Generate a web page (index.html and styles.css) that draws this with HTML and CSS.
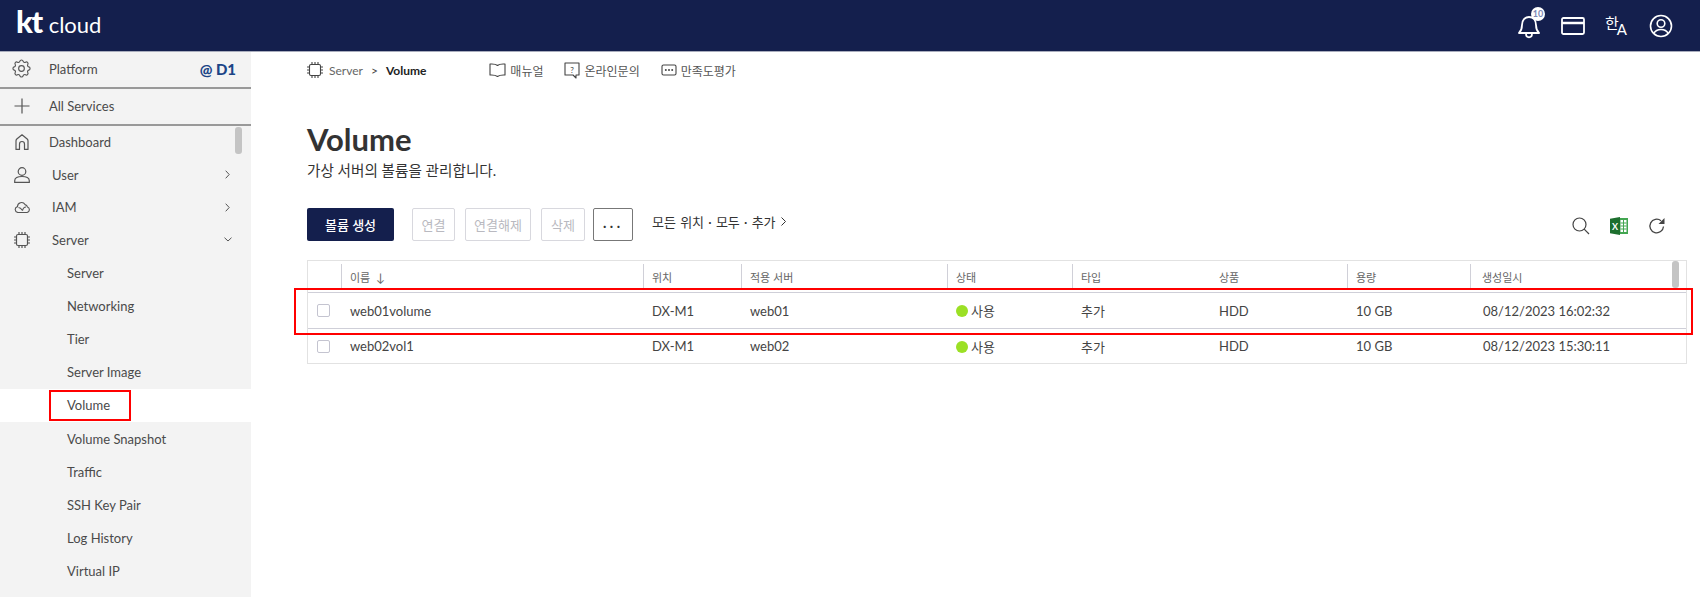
FILE: index.html
```html
<!DOCTYPE html>
<html lang="ko">
<head>
  <meta charset="utf-8">
  <title>Volume - kt cloud</title>
  <link rel="stylesheet" href="styles.css">
</head>
<body>

  <header class="topbar">
    <div class="logo"><span class="logo-kt">kt</span><span class="logo-cloud">cloud</span></div>
    <div class="top-icons">
      <div class="bell">
        <svg width="26" height="26" viewBox="0 0 26 26" fill="none" stroke="#fff" stroke-width="1.8" stroke-linejoin="round"><path d="M3 20c2-2 3-4 3-8 0-5 3-8 7-8s7 3 7 8c0 4 1 6 3 8z"/><path d="M10 20.500c0 5 6 5 6 0"/></svg>
        <span class="bell-count">10</span>
      </div>
      <svg width="24" height="18" viewBox="0 0 24 18" fill="none" stroke="#fff" stroke-width="1.8"><rect x="1" y="1" width="22" height="16" rx="1.500"/><path d="M1 6h22" stroke-width="2.500"/></svg>
      <div class="lang"><span class="lang-ko">한</span><span class="lang-a">A</span></div>
      <svg width="24" height="24" viewBox="0 0 24 24" fill="none" stroke="#fff" stroke-width="1.600"><circle cx="12" cy="12" r="10.500"/><circle cx="12" cy="9.500" r="3.800"/><path d="M4.800 19.500c1.500-3 4-4 7.200-4s5.700 1 7.200 4"/></svg>
    </div>
  </header>

  <div class="page">
    <aside class="sidebar">
      <div class="side-top">
        <svg class="side-icon icon-gear" width="19" height="19" viewBox="2 2 20 20" fill="none" stroke="#555" stroke-width="1.200" stroke-linejoin="round"><path d="M10.325 4.317c.426-1.756 2.924-1.756 3.350 0a1.724 1.724 0 0 0 2.573 1.066c1.543-.94 3.310.826 2.370 2.370a1.724 1.724 0 0 0 1.065 2.572c1.756.426 1.756 2.924 0 3.350a1.724 1.724 0 0 0-1.066 2.573c.94 1.543-.826 3.310-2.370 2.370a1.724 1.724 0 0 0-2.572 1.065c-.426 1.756-2.924 1.756-3.350 0a1.724 1.724 0 0 0-2.573-1.066c-1.543.94-3.310-.826-2.370-2.370a1.724 1.724 0 0 0-1.065-2.572c-1.756-.426-1.756-2.924 0-3.350a1.724 1.724 0 0 0 1.066-2.573c-.94-1.543.826-3.310 2.370-2.370.996.608 2.296.07 2.572-1.065z"/><circle cx="12" cy="12" r="3"/></svg>
        <span class="side-label">Platform</span>
        <span class="zone">@ D1</span>
      </div>
      <div class="side-top">
        <svg class="side-icon" width="16" height="16" viewBox="0 0 16 16" fill="none" stroke="#555" stroke-width="1.200"><path d="M8 .5v15M.5 8h15"/></svg>
        <span class="side-label">All Services</span>
      </div>

      <nav class="side-menu">
        <div class="side-scroll"></div>
        <div class="menu-item">
          <svg class="side-icon icon-home" width="14" height="16" viewBox="0 0 14 16" fill="none" stroke="#555" stroke-width="1.200" stroke-linejoin="round"><path d="M1 15.400V6.800c0-.8.300-1.300.8-1.800L7 .8 12.200 5c.5.500.8 1 .8 1.800v8.600H9.500V10a2.500 2.500 0 0 0-5 0v5.400z"/></svg>
          <span class="side-label">Dashboard</span>
        </div>
        <div class="menu-item menu-sub">
          <svg class="side-icon" width="16" height="16" viewBox="0 0 16 16" fill="none" stroke="#555" stroke-width="1.200"><circle cx="8" cy="4.500" r="3.800"/><path d="M.7 15.400v-1.600c0-2.800 2.800-4.300 7.300-4.300s7.300 1.500 7.300 4.300v1.600z"/></svg>
          <span class="side-label">User</span>
          <svg class="chev" width="5" height="9" viewBox="0 0 5 9" fill="none" stroke="#555" stroke-width="1"><path d="M.7.7l3.500 3.800L.7 8.300"/></svg>
        </div>
        <div class="menu-item menu-sub">
          <svg class="side-icon" width="17" height="12" viewBox="0 0 17 12" fill="none" stroke="#555" stroke-width="1.100"><path d="M4 11.500a3 3 0 0 1-.5-5.900 4 4 0 0 1 7.500-2 3.200 3.200 0 0 1 2.500 2.500 2.800 2.800 0 0 1-.5 5.400z"/><path d="M4.500 6.500c2 0 3 1.500 4 3M12 6c-1.500 0-3 1.500-3.500 3.500"/></svg>
          <span class="side-label">IAM</span>
          <svg class="chev" width="5" height="9" viewBox="0 0 5 9" fill="none" stroke="#555" stroke-width="1"><path d="M.7.7l3.500 3.800L.7 8.300"/></svg>
        </div>
        <div class="menu-item menu-sub menu-open">
          <svg class="side-icon" width="16" height="16" viewBox="0 0 16 16" fill="none" stroke="#555" stroke-width="1.200"><rect x="2.500" y="2.500" width="11" height="11" rx="1.500"/><path d="M5 0v2.500M8 0v2.500M11 0v2.500M5 13.500V16M8 13.500V16M11 13.500V16M0 5h2.500M0 8h2.500M0 11h2.500M13.500 5H16M13.500 8H16M13.500 11H16"/></svg>
          <span class="side-label">Server</span>
          <svg class="chev" width="8" height="5" viewBox="0 0 8 5" fill="none" stroke="#555" stroke-width="1"><path d="M.5.7L4 4 7.500.7"/></svg>
        </div>
        <a class="sub-item">Server</a>
        <a class="sub-item">Networking</a>
        <a class="sub-item">Tier</a>
        <a class="sub-item">Server Image</a>
        <a class="sub-item sub-active"><span class="side-mark"></span>Volume</a>
        <a class="sub-item">Volume Snapshot</a>
        <a class="sub-item">Traffic</a>
        <a class="sub-item">SSH Key Pair</a>
        <a class="sub-item">Log History</a>
        <a class="sub-item">Virtual IP</a>
      </nav>
    </aside>

    <main class="content">
      <div class="crumbs">
        <svg width="16" height="16" viewBox="0 0 16 16" fill="none" stroke="#444" stroke-width="1.100"><rect x="2.500" y="2.500" width="11" height="11" rx="1.500"/><path d="M5 0v2.500M8 0v2.500M11 0v2.500M5 13.500V16M8 13.500V16M11 13.500V16M0 5h2.500M0 8h2.500M0 11h2.500M13.500 5H16M13.500 8H16M13.500 11H16"/></svg>
        <span class="crumb-parent">Server</span>
        <span class="crumb-sep">&gt;</span>
        <span class="crumb-now">Volume</span>
        <div class="help-links">
          <a class="help-link">
            <svg width="17" height="14" viewBox="0 0 17 14" fill="none" stroke="#444" stroke-width="1.100" stroke-linejoin="round"><path d="M8.500 2.500C7 1 4 .8 1 1v11c3-.2 5.500 0 7.500 1.500 2-1.500 4.500-1.700 7.500-1.500V1c-3-.2-6 0-7.500 1.500z"/></svg>
            매뉴얼
          </a>
          <a class="help-link">
            <svg width="16" height="17" viewBox="0 0 16 17" fill="none" stroke="#444" stroke-width="1.100" stroke-linejoin="round"><path d="M1 1h14v12h-3v3l-3-3H1z"/><text x="8" y="10.500" font-size="8" fill="#444" stroke="none" text-anchor="middle" font-family="Lato">?</text></svg>
            온라인문의
          </a>
          <a class="help-link">
            <svg width="16" height="12" viewBox="0 0 16 12" fill="#444" stroke="none"><path fill="none" stroke="#444" stroke-width="1.100" d="M2.500 1h11A1.500 1.500 0 0 1 15 2.500v7a1.500 1.500 0 0 1-1.500 1.500h-11A1.500 1.500 0 0 1 1 9.500v-7A1.500 1.500 0 0 1 2.500 1z"/><circle cx="4.800" cy="6" r="1"/><circle cx="8" cy="6" r="1"/><circle cx="11.200" cy="6" r="1"/></svg>
            만족도평가
          </a>
        </div>
      </div>

      <h1 class="page-title">Volume</h1>
      <p class="page-desc">가상 서버의 볼륨을 관리합니다.</p>

      <div class="toolbar">
        <button class="btn btn-primary">볼륨 생성</button>
        <button class="btn btn-off btn-connect">연결</button>
        <button class="btn btn-off btn-disconnect">연결해제</button>
        <button class="btn btn-off btn-delete">삭제</button>
        <button class="btn btn-more">···</button>
        <span class="filter">모든 위치 · 모두 · 추가
          <svg width="5" height="9" viewBox="0 0 5 9" fill="none" stroke="#333" stroke-width="1"><path d="M.5.5l4 4-4 4"/></svg>
        </span>
        <div class="tools">
          <svg width="18" height="18" viewBox="0 0 18 18" fill="none" stroke="#444" stroke-width="1.200"><circle cx="7.500" cy="7.500" r="6.500"/><path d="M12.200 12.200L17 17"/></svg>
          <svg width="20" height="20" viewBox="0 0 20 20"><path fill="#43a651" d="M7 2h12v16H7z"/><path fill="#fff" d="M11.500 4h6v12h-6z"/><path stroke="#43a651" stroke-width="1" d="M11.500 7h6M11.500 10h6M11.500 13h6M14.500 4v12"/><path fill="#1d6f2e" d="M1 2.800 11 1v18L1 17.200z"/><text x="6" y="13.500" font-size="9" font-weight="700" fill="#fff" text-anchor="middle" font-family="Lato">X</text></svg>
          <svg width="18" height="18" viewBox="0 0 18 18" fill="none" stroke="#444" stroke-width="1.300"><path d="M15.500 9.500a6.800 6.800 0 1 1-2.500-5.800"/><path fill="#444" stroke="none" d="M16.500 1v6h-6z"/></svg>
        </div>
      </div>

      <div class="grid-wrap">
        <div class="grid-scroll"></div>
        <div class="row row-head">
          <div class="cell cell-check"></div>
          <div class="cell">이름 <span class="sort">↓</span></div>
          <div class="cell">위치</div>
          <div class="cell">적용 서버</div>
          <div class="cell">상태</div>
          <div class="cell">타입</div>
          <div class="cell">상품</div>
          <div class="cell">용량</div>
          <div class="cell">생성일시</div>
        </div>
        <div class="row row-first">
          <div class="cell cell-check"><span class="check"></span></div>
          <div class="cell">web01volume</div>
          <div class="cell">DX-M1</div>
          <div class="cell">web01</div>
          <div class="cell"><span class="dot"></span>사용</div>
          <div class="cell">추가</div>
          <div class="cell">HDD</div>
          <div class="cell">10 GB</div>
          <div class="cell">08/12/2023 16:02:32</div>
        </div>
        <div class="row">
          <div class="cell cell-check"><span class="check"></span></div>
          <div class="cell">web02vol1</div>
          <div class="cell">DX-M1</div>
          <div class="cell">web02</div>
          <div class="cell"><span class="dot"></span>사용</div>
          <div class="cell">추가</div>
          <div class="cell">HDD</div>
          <div class="cell">10 GB</div>
          <div class="cell">08/12/2023 15:30:11</div>
        </div>
        <div class="row-mark"></div>
      </div>
    </main>
  </div>

</body>
</html>
```

FILE: styles.css
```css
* { box-sizing: border-box; margin: 0; padding: 0; }
html, body { height: 597px; overflow: hidden; }
body {
  font-family: Lato, "Noto Sans CJK KR", sans-serif;
  background-color: #fff;
  color: #444;
  font-size: 13px;
}

.topbar {
  height: 52px;
  background-color: #141f4d;
  border-bottom: 1px solid #a9adbd;
  display: flex; align-items: center; justify-content: space-between;
  padding: 0 27px 0 16px;
}
.logo { display: flex; align-items: baseline; color: #fff; padding-bottom: 9px; }
.logo-kt { font-size: 31px; font-weight: 900; letter-spacing: -1.500px; line-height: 1; }
.logo-cloud { font-size: 22px; margin-left: 7px; line-height: 1; }
.top-icons { display: flex; align-items: center; gap: 20px; }
.bell { position: relative; width: 26px; height: 26px; left: 1px; }
.bell-count {
  position: absolute; top: -6px; right: -3px;
  width: 14px; height: 14px; border-radius: 50%;
  background-color: #fff; color: #7d88b5;
  font-size: 9px; font-weight: 700; line-height: 14px; text-align: center;
}
.lang { position: relative; width: 24px; height: 26px; color: #fff; }
.lang-ko { position: absolute; left: 0; top: 0; font-size: 15px; line-height: 20px; }
.lang-a { position: absolute; right: 2px; bottom: 2px; font-size: 15px; line-height: 15px; }

.page { display: flex; height: 545px; }

.sidebar { width: 251px; flex: none; background-color: #f3f3f3; color: #4a4a4a; }
.side-top {
  height: 37px;
  display: flex; align-items: center;
  border-bottom: 2px solid #999;
  padding: 0 15px 2px 0;
}
.side-icon { flex: none; margin-left: 14px; }
.icon-gear { margin-left: 12px; }
.icon-home { margin-left: 15px; }
.side-label { position: absolute; left: 49px; }
.zone { margin-left: auto; color: #1c4587; font-size: 15px; font-weight: 900; }

.side-menu { position: relative; }
.side-scroll {
  position: absolute; right: 9px; top: 1px;
  width: 7px; height: 27px; border-radius: 3px;
  background-color: #c4c4c4;
}
.menu-item { height: 32.500px; display: flex; align-items: center; }
.menu-sub { padding-right: 21px; }
.menu-open { padding-right: 19px; }
.menu-sub .side-label { left: 52px; }
.chev { margin-left: auto; }
.sub-item {
  display: flex; align-items: center;
  height: 33.200px;
  padding-left: 67px;
  position: relative;
}
.sub-active { background-color: #fff; }
.side-mark {
  position: absolute; left: 49px; top: 1px; bottom: 1px;
  width: 82px;
  border: 2px solid #f00;
}

.content { flex: 1; min-width: 0; padding: 0 13px 0 56px; position: relative; }

.crumbs { height: 36px; display: flex; align-items: center; font-size: 12px; }
.crumb-parent { margin-left: 6px; color: #666; }
.crumb-sep { margin: 0 8px; color: #444; font-size: 12px; }
.crumb-now { color: #222; font-weight: 700; }
.help-links { display: flex; gap: 21px; margin-left: 63px; font-size: 12px; color: #555; }
.help-link { display: flex; align-items: center; gap: 4px; }

.page-title { margin-top: 33px; font-size: 31px; font-weight: 700; color: #333; line-height: 36px; }
.page-desc { margin-top: 3px; font-size: 14.600px; color: #333; line-height: 22px; }

.toolbar { display: flex; align-items: center; margin-top: 26px; height: 33px; }
.btn {
  height: 33px;
  font-family: inherit; font-size: 13px;
  background-color: #fff;
  border-radius: 2px;
  margin-right: 10px;
}
.btn-primary {
  width: 87px; margin-right: 18px;
  background-color: #141f4d; color: #fff; border: none; font-weight: 500;
}
.btn-off { border: 1px solid #d8d8de; color: #b9b9c0; }
.btn-connect { width: 43px; }
.btn-disconnect { width: 66px; }
.btn-delete { width: 44px; margin-right: 8px; }
.btn-more { width: 40px; margin-right: 0; border: 1px solid #777; color: #333; font-size: 15px; letter-spacing: 3px; }
.filter { margin-left: 19px; margin-top: -6px; font-size: 13px; word-spacing: .900px; color: #333; display: flex; align-items: center; gap: 5px; }
.tools { margin-left: auto; margin-right: 21px; margin-top: 2px; display: flex; align-items: center; gap: 19px; }

.grid-wrap {
  position: relative;
  margin-top: 19px;
  border: 1px solid #e2e2e2;
}
.grid-scroll {
  position: absolute; right: 7px; top: 0;
  width: 7px; height: 27px; border-radius: 3px;
  background-color: #c4c4c4;
}
.row {
  display: grid;
  grid-template-columns: 33px 302px 98px 206px 125px 138px 137px 123px 1fr;
  height: 34px;
  font-size: 13px;
  align-items: center;
}
.row-first { height: 36px; border-bottom: 1px solid #cfcfd8; }
.row-head { height: 32px; border-bottom: 1px solid #cfcfd8; font-size: 11px; color: #666; }
.cell { padding-left: 9px; white-space: nowrap; }
.cell:last-child { padding-left: 13px; }
.row-head .cell { border-left: 1px solid #d0d0d8; height: 26px; line-height: 28px; align-self: start; margin-top: 3px; padding-left: 8px; }
.row-head .cell:last-child { padding-left: 11px; }
.row-head .cell:first-child, .row-head .cell:nth-child(7) { border-left: none; }
.row-head .cell:nth-child(7) { padding-left: 9px; }
.cell-check { padding-left: 9px; display: flex; align-items: center; }
.sort { margin-left: 3px; font-size: 12px; }
.check {
  width: 13px; height: 13px;
  border: 1px solid #c4c4d0; border-radius: 2px;
  background-color: #fff;
}
.dot {
  display: inline-block; vertical-align: -1px;
  width: 12px; height: 12px; margin-right: 3px;
  border-radius: 50%; background-color: #9be025;
}
.row-mark {
  position: absolute; left: -14px; right: -7px; top: 27px;
  height: 47px;
  border: 2px solid #f00;
}
```
